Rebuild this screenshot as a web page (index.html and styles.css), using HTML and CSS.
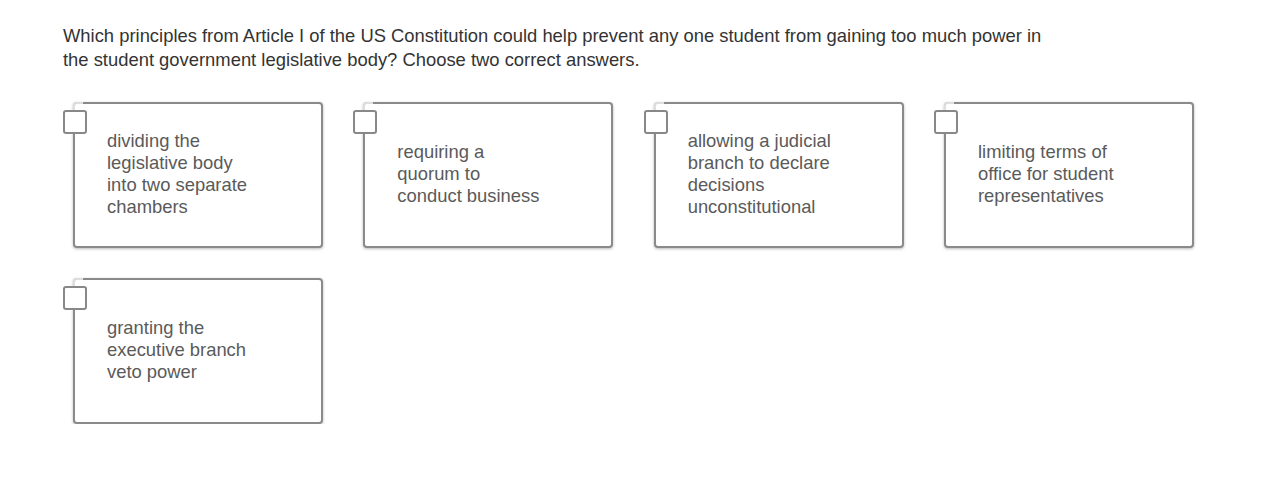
FILE: index.html
```html
<!DOCTYPE html>
<html lang="en">
<head>
<meta charset="utf-8">
<title>Question</title>
<link rel="stylesheet" href="styles.css">
</head>
<body>
<main class="page">
  <p class="question">Which principles from Article I of the US Constitution could help prevent any one student from gaining too much power in<br>the student government legislative body? Choose two correct answers.</p>
  <div class="options">
    <label class="option"><span class="check"></span><span class="text">dividing the legislative body into two separate chambers</span></label>
    <label class="option"><span class="check"></span><span class="text">requiring a quorum to conduct business</span></label>
    <label class="option"><span class="check"></span><span class="text">allowing a judicial branch to declare decisions unconstitutional</span></label>
    <label class="option"><span class="check"></span><span class="text">limiting terms of office for student representatives</span></label>
    <label class="option"><span class="check"></span><span class="text">granting the executive branch veto power</span></label>
  </div>
</main>
</body>
</html>
```

FILE: styles.css
```css
html, body {
  margin: 0;
  background: #ffffff;
}

body {
  font-family: "Liberation Sans", Arial, Helvetica, sans-serif;
}

.page {
  padding: 24px 0 0 63px;
}

.question {
  margin: 0;
  font-size: 18.4px;
  line-height: 24px;
  color: #333333;
  white-space: nowrap;
}

.options {
  display: grid;
  grid-template-columns: repeat(4, 250px);
  column-gap: 40.33px;
  row-gap: 30px;
  margin-top: 30px;
  padding-left: 10px;
}

.option {
  position: relative;
  box-sizing: border-box;
  height: 146px;
  padding: 0 0 2px 32px;
  display: flex;
  align-items: center;
  background: #ffffff;
  border: 2px solid #8a8a8a;
  border-radius: 4px;
  box-shadow: 0 1px 3px rgba(0, 0, 0, 0.28);
  cursor: pointer;
}

.option::before {
  content: "";
  position: absolute;
  left: -2px;
  top: -2px;
  width: 10px;
  height: 8px;
  background: rgba(255, 255, 255, 0.72);
  border-top-left-radius: 4px;
}

.check {
  position: absolute;
  left: -12px;
  top: 6px;
  box-sizing: border-box;
  width: 24px;
  height: 24px;
  background: #ffffff;
  border: 2px solid #888888;
  border-radius: 3px;
}

.text {
  width: 147px;
  font-size: 18.4px;
  line-height: 22px;
  color: #5a5a5a;
}
```
